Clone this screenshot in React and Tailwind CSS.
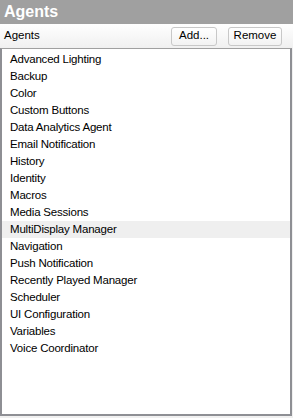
import React from 'react'

const agents = [
  'Advanced Lighting',
  'Backup',
  'Color',
  'Custom Buttons',
  'Data Analytics Agent',
  'Email Notification',
  'History',
  'Identity',
  'Macros',
  'Media Sessions',
  'MultiDisplay Manager',
  'Navigation',
  'Push Notification',
  'Recently Played Manager',
  'Scheduler',
  'UI Configuration',
  'Variables',
  'Voice Coordinator',
]

const App = () => {
  const selected = 'MultiDisplay Manager'

  return (
    <div className="w-[293px] h-[418px] flex flex-col bg-[#f0f0f0] font-['Liberation_Sans',Arial,sans-serif] text-[11.5px] text-black">
      <div className="h-[24px] shrink-0 bg-[#a0a0a0] px-[4px] flex items-center text-white font-bold text-[16px] leading-none">
        Agents
      </div>

      <div className="h-[24px] shrink-0 flex items-center justify-between pl-[4px] pr-[11px] bg-gradient-to-b from-white to-[#f0f0f0]">
        <span>Agents</span>
        <div className="flex gap-[11px]">
          <button className="w-[46px] h-[19px] rounded-[3px] border border-[#c8c8c8] bg-gradient-to-b from-white to-[#f2f2f2] leading-none">
            Add...
          </button>
          <button className="w-[54px] h-[19px] rounded-[3px] border border-[#c8c8c8] bg-gradient-to-b from-white to-[#f2f2f2] leading-none">
            Remove
          </button>
        </div>
      </div>

      <div className="h-[368px] w-[292px] shrink-0 border-t border-[#a0a0a0] border-x-2 border-x-[#8e8f94] border-b-2 border-b-[#8e8f94] bg-white pt-[2px]">
        {agents.map((name) => (
          <div
            key={name}
            className={
              'h-[17px] flex items-center pl-[8px] tracking-[-0.2px] ' +
              (name === selected ? 'bg-[#efefef]' : '')
            }
          >
            {name}
          </div>
        ))}
      </div>
    </div>
  )
}

export default App
